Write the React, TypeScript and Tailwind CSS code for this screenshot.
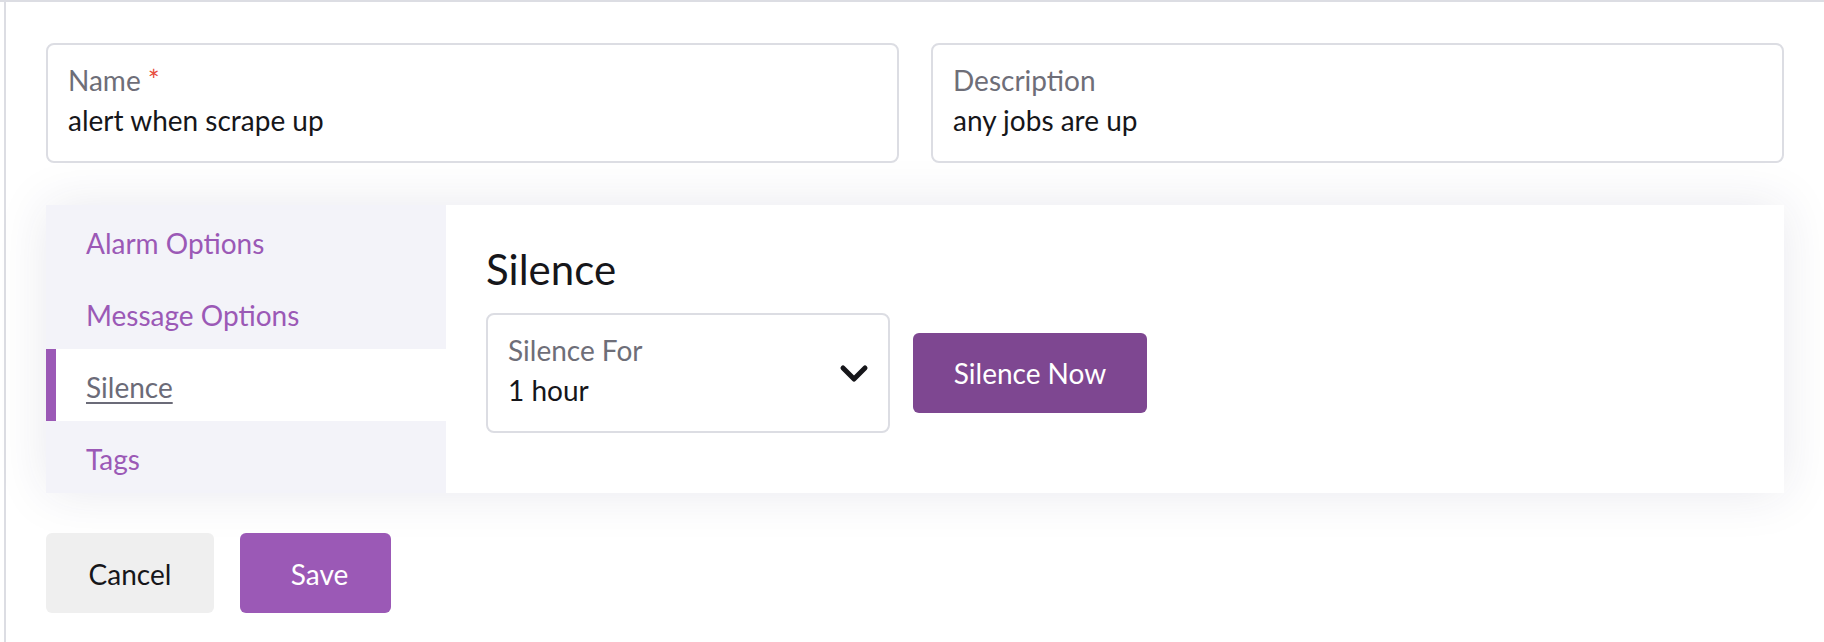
import { useState } from 'react';

const tabs = ['Alarm Options', 'Message Options', 'Silence', 'Tags'];

const Field = ({ label, value, required }: { label: string; value: string; required?: boolean }) => (
    <div className="h-[120px] border-2 border-[#dcdde3] rounded-[8px] px-[20px] pt-[19px] bg-white">
        <div className="text-[28px] leading-[1.2] text-[#6e6e78]">
            {label}
            {required && <span className="text-[#e74c3c]"> *</span>}
        </div>
        <div className="mt-[6px] text-[28px] leading-[1.2] text-[#16161a]">{value}</div>
    </div>
);

const App = () => {
    const [active, setActive] = useState('Silence');

    return (
        <div className="min-h-[642px] bg-white border-t-2 border-[#dcdde3] font-['Lato',sans-serif]">
            <div className="ml-[4px] min-h-[640px] border-l-2 border-[#dcdde3] px-[40px] pt-[41px]">
                <div className="grid grid-cols-2 gap-[32px]">
                    <Field label="Name" value="alert when scrape up" required />
                    <Field label="Description" value="any jobs are up" />
                </div>

                <div className="mt-[42px] flex bg-white shadow-[0_0_48px_rgba(40,40,90,0.1)]">
                    <div className="w-[400px] bg-[#f3f3f9]">
                        {tabs.map((tab) => {
                            const isActive = tab === active;
                            return (
                                <div
                                    key={tab}
                                    onClick={() => setActive(tab)}
                                    className={
                                        isActive
                                            ? 'h-[72px] flex items-center bg-white border-l-[10px] border-[#9b59b6] pl-[30px] pt-[5px] text-[28px] leading-[1.2] text-[#6b6b78] underline decoration-2 underline-offset-[4px] cursor-pointer'
                                            : 'h-[72px] flex items-center pl-[40px] pt-[5px] text-[28px] leading-[1.2] text-[#9b59b6] cursor-pointer'
                                    }
                                >
                                    {tab}
                                </div>
                            );
                        })}
                    </div>

                    <div className="flex-1 pl-[40px] pt-[39px]">
                        <h2 className="text-[42px] leading-[1.2] text-[#16161a]">Silence</h2>
                        <div className="mt-[19px] flex items-center">
                            <div className="w-[404px] h-[120px] border-2 border-[#dcdde3] rounded-[8px] pl-[20px] pr-[19px] pt-[19px] flex">
                                <div className="flex-1">
                                    <div className="text-[28px] leading-[1.2] text-[#6e6e78]">Silence For</div>
                                    <div className="mt-[6px] text-[28px] leading-[1.2] text-[#16161a]">1 hour</div>
                                </div>
                                <div className="flex items-center pb-[19px]">
                                    <svg width="30" height="19" viewBox="0 0 30 19" fill="none">
                                        <polyline
                                            points="4,4 15,15 26,4"
                                            stroke="#16161a"
                                            strokeWidth="5"
                                            strokeLinecap="round"
                                            strokeLinejoin="round"
                                        />
                                    </svg>
                                </div>
                            </div>
                            <button className="ml-[23px] w-[234px] h-[80px] rounded-[6px] bg-[#7e4791] text-white text-[28px] leading-[1.2]">
                                Silence Now
                            </button>
                        </div>
                    </div>
                </div>

                <div className="mt-[40px] flex gap-[26px]">
                    <button className="w-[168px] h-[80px] pt-[4px] rounded-[6px] bg-[#efefef] text-[#16161a] text-[28px] leading-[1.2]">
                        Cancel
                    </button>
                    <button className="w-[151px] h-[80px] pt-[4px] pl-[8px] rounded-[6px] bg-[#9b59b6] text-white text-[28px] leading-[1.2]">
                        Save
                    </button>
                </div>
            </div>
        </div>
    );
};

export default App;
